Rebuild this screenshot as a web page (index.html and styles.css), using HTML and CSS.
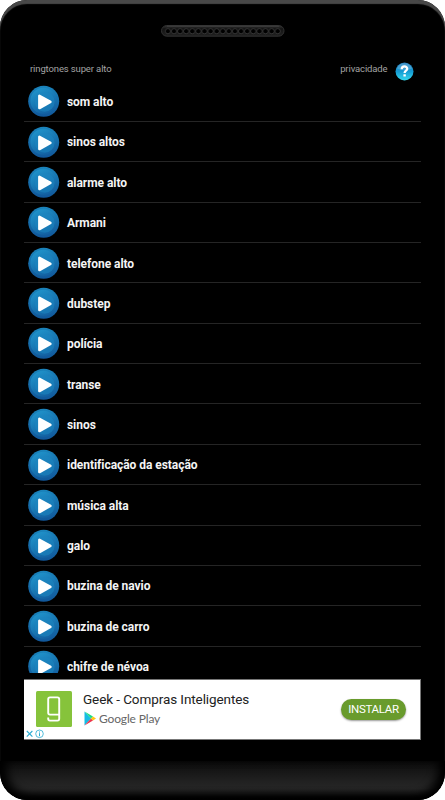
FILE: index.html
```html
<!DOCTYPE html>
<html lang="pt">
<head>
<meta charset="utf-8">
<title>ringtones super alto</title>
<link rel="stylesheet" href="styles.css">
</head>
<body>
<svg width="0" height="0" class="defs" aria-hidden="true">
  <defs>
    <linearGradient id="rim" x1="0" y1="0" x2="0" y2="1"><stop offset="0" stop-color="#1a83bb"/><stop offset="1" stop-color="#11579a"/></linearGradient>
    <linearGradient id="disc" x1="0" y1="0" x2=".5" y2="1"><stop offset="0" stop-color="#2199cf"/><stop offset="1" stop-color="#1463a3"/></linearGradient>
    <linearGradient id="holes" x1="0" y1="0" x2="0" y2="1"><stop offset="0" stop-color="#383838"/><stop offset=".3" stop-color="#141414"/><stop offset="1" stop-color="#202020"/></linearGradient>
    <pattern id="grill" x="3.9" y="0" width="6.1" height="12" patternUnits="userSpaceOnUse"><circle cx="3" cy="6.2" r="2.6" fill="#000" stroke="#3c3c3c" stroke-width=".8"/></pattern>
    <linearGradient id="help" x1="0" y1="0" x2="0" y2="1"><stop offset="0" stop-color="#237dbb"/><stop offset=".5" stop-color="#159bd3"/><stop offset="1" stop-color="#35d9ee"/></linearGradient>
    <symbol id="play" viewBox="0 0 32 32">
      <circle cx="15.7" cy="16.3" r="15.5" fill="url(#rim)"/>
      <circle cx="15.4" cy="15.8" r="13" fill="url(#disc)"/>
      <circle cx="16.7" cy="16.8" r="9.9" fill="#1d86bf" opacity=".6"/>
      <path d="M11.4 10.8v12.2L22.4 16.8z" fill="#fff" stroke="#fff" stroke-width="2.6" stroke-linejoin="round"/>
    </symbol>
  </defs>
</svg>
<div class="phone">
  <div class="top"><svg class="speaker" width="124" height="12" viewBox="0 0 124 12"><rect x=".5" y=".5" width="122.5" height="10.7" rx="5.3" fill="url(#holes)" stroke="#303030"/><path d="M6 1.2H118" stroke="#404040"/><rect x="3.9" y="1" width="116" height="10" fill="url(#grill)"/></svg></div>
  <header class="bar">
    <span>ringtones super alto</span>
    <span class="privacy">privacidade</span>
    <svg class="help" width="19" height="19" viewBox="0 0 19 19"><circle cx="9.5" cy="9.5" r="9" fill="url(#help)"/><path d="M2 6.5A8 8 0 0 1 17 6.5Q9.5 10 2 6.5" fill="#8fc4e5" opacity=".35"/><path d="M6.7 7.2C6.7 3.5 12.4 3.7 12.2 6.9C12.1 8.7 9.7 8.7 9.6 11" fill="none" stroke="#fff" stroke-width="2.3"/><rect x="8.4" y="12.3" width="2.4" height="2.2" fill="#fff"/></svg>
  </header>
  <ul class="list">
    <li><svg class="icon"><use href="#play"/></svg><span>som alto</span></li>
    <li><svg class="icon"><use href="#play"/></svg><span>sinos altos</span></li>
    <li><svg class="icon"><use href="#play"/></svg><span>alarme alto</span></li>
    <li><svg class="icon"><use href="#play"/></svg><span>Armani</span></li>
    <li><svg class="icon"><use href="#play"/></svg><span>telefone alto</span></li>
    <li><svg class="icon"><use href="#play"/></svg><span>dubstep</span></li>
    <li><svg class="icon"><use href="#play"/></svg><span>polícia</span></li>
    <li><svg class="icon"><use href="#play"/></svg><span>transe</span></li>
    <li><svg class="icon"><use href="#play"/></svg><span>sinos</span></li>
    <li><svg class="icon"><use href="#play"/></svg><span>identificação da estação</span></li>
    <li><svg class="icon"><use href="#play"/></svg><span>música alta</span></li>
    <li><svg class="icon"><use href="#play"/></svg><span>galo</span></li>
    <li><svg class="icon"><use href="#play"/></svg><span>buzina de navio</span></li>
    <li><svg class="icon"><use href="#play"/></svg><span>buzina de carro</span></li>
    <li><svg class="icon"><use href="#play"/></svg><span>chifre de névoa</span></li>
  </ul>
  <section class="ad">
    <svg class="app" width="36" height="36" viewBox="0 0 36 36"><rect width="36" height="36" rx="1.5" fill="#86c33b"/><path d="M23.2 23.6H14Q12.2 23.6 12.2 21.8V8.2Q12.2 6.4 14 6.4H21.4Q23.2 6.4 23.2 8.2V27.8Q23.2 29.6 21.4 29.6H14Q12.2 29.6 12.2 27.8V26.6" fill="none" stroke="#fff" stroke-width="1.9"/></svg>
    <div class="copy">
      <div class="title">Geek - Compras Inteligentes</div>
      <div class="store"><svg width="12" height="15" viewBox="0 0 12 15"><path d="M.5 .5V14.5L7 7.5z" fill="#16bce5"/><path d="M.5 .5L9 5.4 7 7.5z" fill="#18dc83"/><path d="M.5 14.5L9 9.6 7 7.5z" fill="#ec344d"/><path d="M9 5.4L12 7.5 9 9.6 7 7.5z" fill="#ffc514"/></svg><span>Google Play</span></div>
    </div>
    <span class="install">INSTALAR</span>
    <svg class="choices" width="20" height="10" viewBox="0 0 20 10"><path d="M2.8 2l5.6 5.6M8.4 2l-5.6 5.6" stroke="#2aacd2" stroke-width="1.1"/><circle cx="15.5" cy="4.8" r="3.8" fill="none" stroke="#2aacd2" stroke-width=".8"/><path d="M15.5 2.5v1M15.5 4.2v3" stroke="#2aacd2"/></svg>
  </section>
  <div class="chin"></div>
</div>
</body>
</html>
```
FILE: styles.css
```css
* { box-sizing: border-box; }
body { margin: 0; background: #fff; font-family: Roboto, sans-serif; }
.defs { display: block; }
.phone {
  width: 445px; height: 800px; overflow: hidden;
  display: flex; flex-direction: column;
  background: #000; border-radius: 27px;
  box-shadow: inset 0 4px 1px #484848;
}
.top { height: 56px; flex: none; padding: 25px 0 0 161px; }
.speaker { display: block; }
.bar {
  height: 25.6px; flex: none; padding: 0 31px 1px 30px;
  display: flex; align-items: center;
  color: #a3a3a3; font-size: 9.5px; letter-spacing: -.13px;
}
.privacy { margin-left: auto; margin-right: 7.5px; }
.help { position: relative; top: 3px; }
.list {
  list-style: none; margin: 0 24px; padding: 0;
  height: 591.4px; flex: none; overflow: hidden;
}
.list li {
  height: 40.36px; padding-left: 4px;
  display: flex; align-items: center; gap: 7px;
  border-bottom: 1px solid #252525;
  color: #f4f4f4; font-size: 12px; font-weight: 700; letter-spacing: -.05px;
}
.list span { padding-top: 1.6px; }
.icon { width: 32px; height: 32px; flex: none; }
.ad {
  position: relative; flex: none;
  height: 61px; width: 397px; margin: 6px 0 0 24px; padding: 0 14px 0 12px;
  display: flex; align-items: center;
  background: #fff; border: solid #777; border-width: 1px 1px 1px 0;
}
.app { flex: none; }
.copy { margin-left: 11px; flex: 1; }
.title { font-size: 13.5px; letter-spacing: -.09px; line-height: 19px; color: #222; white-space: nowrap; }
.store { display: flex; align-items: center; gap: 3px; height: 20px; margin-left: 1px; color: #666; font: 12px/18px Lato, sans-serif; letter-spacing: -.15px; }
.install {
  width: 65px; height: 21px; border-radius: 11px;
  background: #699b2d; color: #fff; font-size: 11.5px; letter-spacing: -.28px; line-height: 20px; text-align: center;
  box-shadow: 0 1px 2px #0006;
}
.choices { position: absolute; left: 0; bottom: 0; }
.chin {
  flex: 1; margin-top: 21px;
  background: linear-gradient(#0c0c0c, #202020 50%, #262626 70%, #1c1c1c 85%, #000);
  box-shadow: inset 7px -3px 10px #000, inset -7px -3px 10px #000;
  border-radius: 0 0 27px 27px;
}
```
